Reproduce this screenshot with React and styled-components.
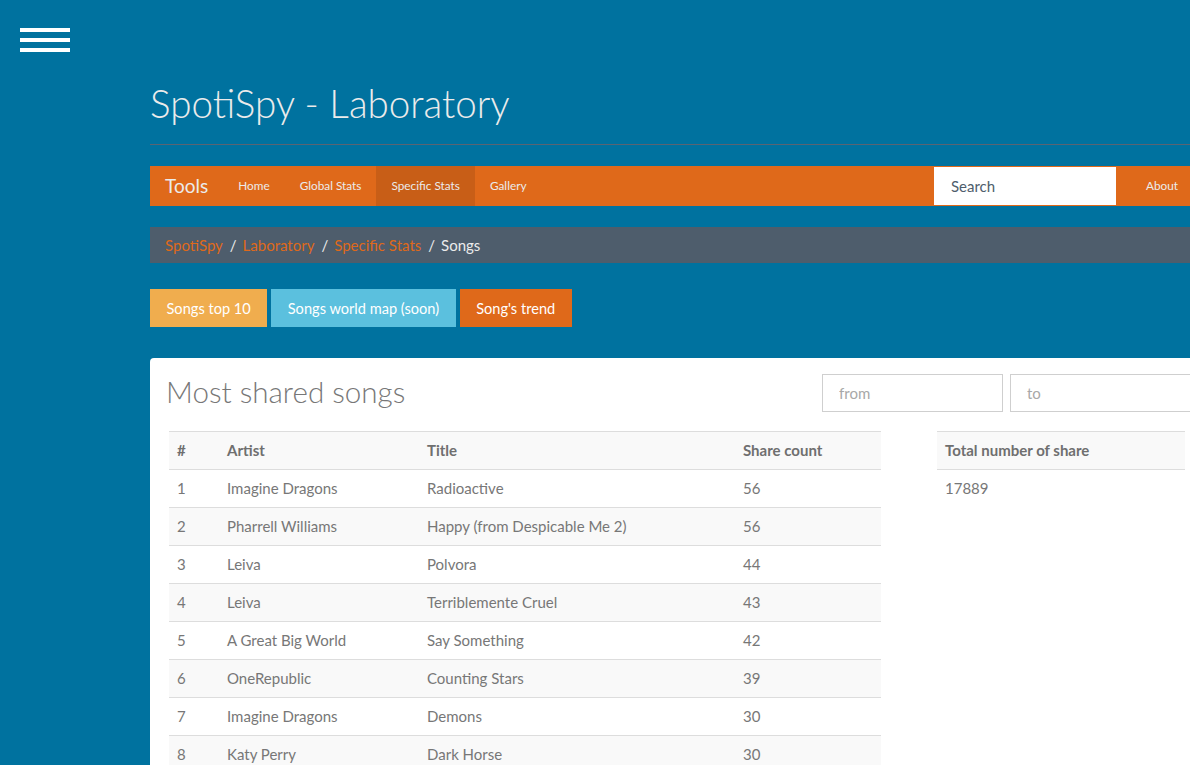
import React from "react";
import styled, { createGlobalStyle } from "styled-components";

const GlobalStyle = createGlobalStyle`
  html, body { margin: 0; padding: 0; overflow: hidden; }
  body {
    background: #00729f;
    font-family: Lato, "Open Sans", "Liberation Sans", sans-serif;
    font-size: 15px;
    line-height: 1.42857;
    color: #777;
  }
  * { box-sizing: border-box; }
`;

const Page = styled.div`
  position: relative;
  height: 765px;
  width: 1190px;
  overflow: hidden;
`;

const MenuToggle = styled.button`
  position: absolute;
  left: 20px;
  top: 28px;
  width: 50px;
  padding: 0;
  border: 0;
  background: none;
  display: flex;
  flex-direction: column;
  gap: 6px;
  cursor: pointer;
`;

const Bar = styled.span`
  display: block;
  height: 4px;
  background: #fff;
`;

const Container = styled.div`
  margin-left: 150px;
  width: 1170px;
  padding-top: 82px;
`;

const Title = styled.h1`
  margin: 0;
  font-size: 38.6px;
  font-weight: 300;
  line-height: 43px;
  color: #ebebeb;
  padding-bottom: 19px;
  border-bottom: 1px solid #5a6472;
`;

const Navbar = styled.nav`
  margin-top: 21px;
  height: 40px;
  background: #df691a;
  display: flex;
  align-items: stretch;
`;

const Brand = styled.a`
  padding: 0 15px;
  font-size: 19px;
  color: #ebebeb;
  line-height: 40px;
`;

const NavLink = styled.a`
  padding: 0 15px;
  font-size: 11.8px;
  line-height: 40px;
  color: #ebebeb;
  background: ${(p) => (p.$active ? "#c85e17" : "transparent")};
`;

const Spacer = styled.div`
  flex: 1;
`;

const SearchInput = styled.input`
  width: 182px;
  height: 38px;
  margin-top: 1px;
  border: 0;
  padding: 0 17px;
  font-family: inherit;
  font-size: 15px;
  color: #4e5d6c;
  background: #fff;
  outline: none;
  &::placeholder { color: #4e5d6c; opacity: 1; }
`;

const AboutLink = styled(NavLink)`
  margin-left: 15px;
  margin-right: 127px;
`;

const Breadcrumb = styled.ol`
  list-style: none;
  margin: 21px 0 0;
  padding: 7px 15px;
  background: #4e5d6c;
  display: flex;
  color: #ebebeb;
  line-height: 22px;
  li + li::before {
    content: "/";
    padding: 0 6px 0 7px;
    color: #ebebeb;
  }
`;

const Crumb = styled.li`
  color: ${(p) => (p.$active ? "#ebebeb" : "#df691a")};
`;

const ButtonRow = styled.div`
  margin-top: 26px;
  display: flex;
  gap: 4px;
`;

const Btn = styled.button`
  height: 38px;
  padding: 0 16.5px;
  border: 0;
  border-radius: 0;
  font-family: inherit;
  font-size: 14.6px;
  color: #fff;
  background: ${(p) => p.$bg};
  cursor: pointer;
`;

const Panel = styled.section`
  margin-top: 31px;
  background: #fff;
  border-radius: 4px 0 0 0;
  padding: 16px 0 20px 16px;
`;

const PanelHead = styled.div`
  display: flex;
  align-items: flex-start;
`;

const PanelTitle = styled.h2`
  margin: 0;
  font-size: 29.6px;
  font-weight: 300;
  line-height: 34px;
  color: #777;
  flex: 1;
  padding-top: 1px;
`;

const DateInputs = styled.div`
  display: flex;
  gap: 7px;
  margin-right: 129px;
`;

const DateInput = styled.input`
  width: 181px;
  height: 38px;
  border: 1px solid #cfcfcf;
  padding: 0 16px;
  font-family: inherit;
  font-size: 15px;
  color: #777;
  outline: none;
  &::placeholder { color: #a8a8a8; opacity: 1; }
`;

const Tables = styled.div`
  margin-top: 19px;
  padding-left: 3px;
  display: flex;
  gap: 56px;
  align-items: flex-start;
`;

const Table = styled.table`
  width: ${(p) => p.$w}px;
  border-collapse: collapse;
  border-top: 1px solid #ddd;
  tr:nth-child(odd) { background: #f9f9f9; }
`;

const Th = styled.th`
  text-align: left;
  font-weight: 700;
  color: #6f6f6f;
  padding: 8px;
  line-height: 21px;
  border-bottom: 1px solid #ddd;
  width: ${(p) => (p.$w ? `${p.$w}px` : "auto")};
`;

const Td = styled.td`
  padding: 8px;
  line-height: 21px;
  border-bottom: ${(p) => (p.$noBorder ? "0" : "1px solid #ddd")};
  color: #777;
`;

const songs = [
  ["Imagine Dragons", "Radioactive", 56],
  ["Pharrell Williams", "Happy (from Despicable Me 2)", 56],
  ["Leiva", "Polvora", 44],
  ["Leiva", "Terriblemente Cruel", 43],
  ["A Great Big World", "Say Something", 42],
  ["OneRepublic", "Counting Stars", 39],
  ["Imagine Dragons", "Demons", 30],
  ["Katy Perry", "Dark Horse", 30],
];

export default function App() {
  return (
    <>
      <GlobalStyle />
      <Page>
        <MenuToggle aria-label="menu">
          <Bar />
          <Bar />
          <Bar />
        </MenuToggle>
        <Container>
          <Title>SpotiSpy - Laboratory</Title>
          <Navbar>
            <Brand>Tools</Brand>
            <NavLink>Home</NavLink>
            <NavLink>Global Stats</NavLink>
            <NavLink $active>Specific Stats</NavLink>
            <NavLink>Gallery</NavLink>
            <Spacer />
            <SearchInput placeholder="Search" />
            <AboutLink>About</AboutLink>
          </Navbar>
          <Breadcrumb>
            <Crumb>SpotiSpy</Crumb>
            <Crumb>Laboratory</Crumb>
            <Crumb>Specific Stats</Crumb>
            <Crumb $active>Songs</Crumb>
          </Breadcrumb>
          <ButtonRow>
            <Btn $bg="#f0ad4e">Songs top 10</Btn>
            <Btn $bg="#5bc0de">Songs world map (soon)</Btn>
            <Btn $bg="#df691a">Song's trend</Btn>
          </ButtonRow>
          <Panel>
            <PanelHead>
              <PanelTitle>Most shared songs</PanelTitle>
              <DateInputs>
                <DateInput placeholder="from" />
                <DateInput placeholder="to" />
              </DateInputs>
            </PanelHead>
            <Tables>
              <Table $w={712}>
                <tbody>
                  <tr>
                    <Th $w={50}>#</Th>
                    <Th $w={200}>Artist</Th>
                    <Th $w={316}>Title</Th>
                    <Th>Share count</Th>
                  </tr>
                  {songs.map((s, i) => (
                    <tr key={i}>
                      <Td>{i + 1}</Td>
                      <Td>{s[0]}</Td>
                      <Td>{s[1]}</Td>
                      <Td>{s[2]}</Td>
                    </tr>
                  ))}
                </tbody>
              </Table>
              <Table $w={248}>
                <tbody>
                  <tr>
                    <Th>Total number of share</Th>
                  </tr>
                  <tr>
                    <Td $noBorder>17889</Td>
                  </tr>
                </tbody>
              </Table>
            </Tables>
          </Panel>
        </Container>
      </Page>
    </>
  );
}
